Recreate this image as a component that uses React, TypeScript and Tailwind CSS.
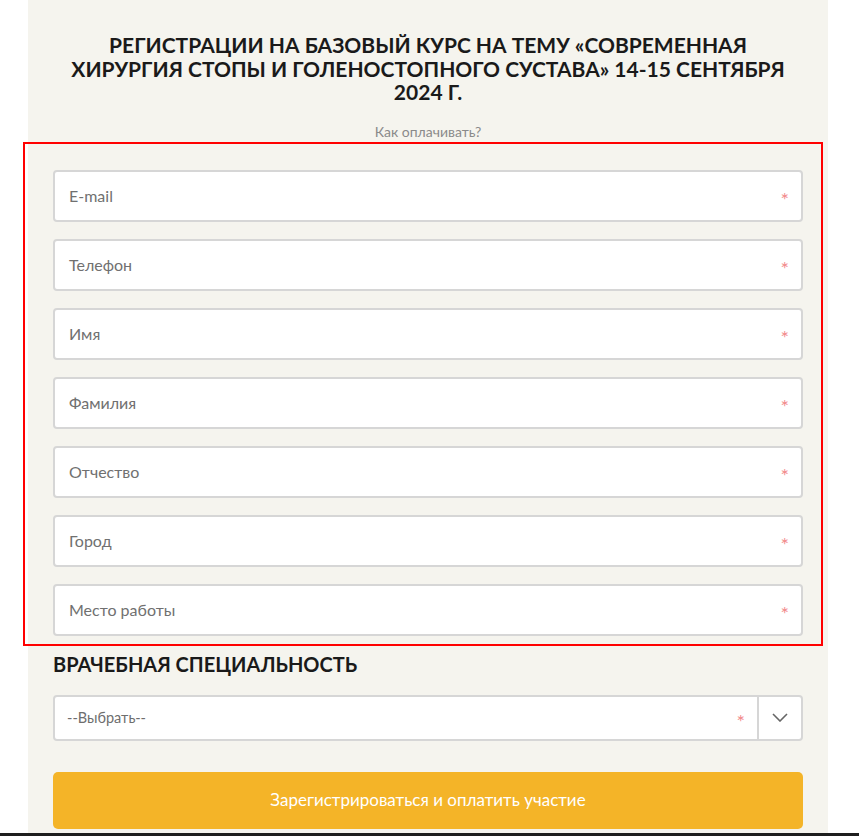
import React from "react";

const fields = ["E-mail", "Телефон", "Имя", "Фамилия", "Отчество", "Город", "Место работы"];

function Asterisk() {
  return <span className="mt-[6px] text-[20px] leading-none text-[#f28a8a]">*</span>;
}

function Field({ label }: { label: string }) {
  return (
    <div className="flex h-[52px] items-center justify-between rounded-[4px] border-2 border-[#d6d6d6] bg-white pl-[14px] pr-[12px]">
      <span className="text-[16px] text-[#707070]">{label}</span>
      <Asterisk />
    </div>
  );
}

export default function App() {
  return (
    <div className="min-h-[836px] bg-white font-['Lato','Open_Sans',sans-serif]">
      <div className="ml-[28px] w-[800px] bg-[#f5f4ee] pt-[33px] pb-[4px]">
        <h1 className="mx-auto max-w-[730px] text-center text-[21px] font-bold uppercase leading-[23.5px] text-[#1a1a1a]">
          Регистрации на базовый курс на тему «Современная хирургия стопы и голеностопного сустава» 14-15 сентября 2024 г.
        </h1>
        <div className="mt-[20px] text-center text-[14px] leading-[16px] text-[#8a8a8a]">Как оплачивать?</div>
        <div className="-ml-[5px] mt-[2px] flex w-[800px] flex-col gap-[17px] border-2 border-[#ff0000] pt-[26px] pb-[8px] pl-[28px] pr-[18px]">
          {fields.map((f) => (
            <Field key={f} label={f} />
          ))}
        </div>
        <h2 className="mx-[25px] mt-[6px] text-[20px] font-bold uppercase leading-[24px] text-[#1a1a1a]">
          Врачебная специальность
        </h2>
        <div className="mx-[25px] mt-[19px] flex h-[46px] items-stretch rounded-[4px] border-2 border-[#d6d6d6] bg-white">
          <div className="flex flex-1 items-center justify-between pl-[12px] pr-[12px]">
            <span className="text-[14.5px] text-[#6e6e6e]">--Выбрать--</span>
            <Asterisk />
          </div>
          <div className="flex w-[44px] items-center justify-center border-l-2 border-[#d6d6d6]">
            <svg width="16" height="9" viewBox="0 0 16 9" fill="none">
              <path d="M1 1l7 7 7-7" stroke="#666" strokeWidth="1.6" />
            </svg>
          </div>
        </div>
        <button className="mx-[25px] mt-[31px] flex h-[57px] w-[750px] items-center justify-center rounded-[5px] bg-[#f4b428] text-[17px] text-white">
          Зарегистрироваться и оплатить участие
        </button>
      </div>
      <div className="h-[3px] w-full bg-[#1e1e1e]" />
    </div>
  );
}
